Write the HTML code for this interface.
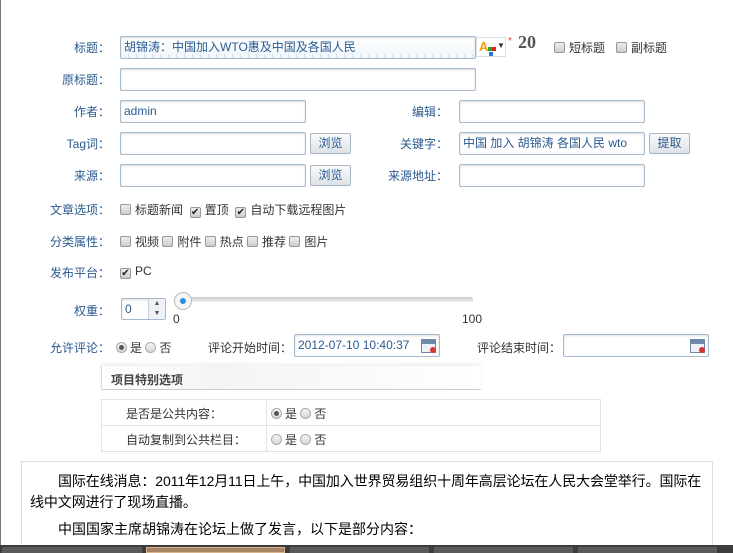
<!DOCTYPE html>
<html><head><meta charset="utf-8"><style>
*{margin:0;padding:0;box-sizing:border-box}
body{width:733px;height:553px;background:#fff;position:relative;overflow:hidden;font:12px "Liberation Sans","Noto Sans CJK SC",sans-serif;color:#333}
.a{position:absolute;white-space:nowrap}
.l{color:#2a5a8f;text-align:right}
.in{position:absolute;border:1px solid #a5b9cf;border-radius:2px;background:#fff;box-shadow:inset 0 1px 2px #ddd;height:23px;padding-left:3px;line-height:21px;color:#2a5a8f}
.btn{position:absolute;border:1px solid #a9b6c4;border-radius:2px;background:linear-gradient(#fafafa,#dde2e8);height:21px;width:41px;text-align:center;line-height:19px;color:#2a5a8f}
.cb{display:inline-block;width:11px;height:11px;border:1px solid #999;border-radius:2px;background:linear-gradient(#eee,#ccc);vertical-align:-1px;margin-right:4px;font-size:10px;line-height:9px;text-align:center;color:#222}
.rd{display:inline-block;width:11px;height:11px;border:1px solid #aaa;border-radius:50%;background:linear-gradient(#f6f6f6,#d6d6d6);vertical-align:-1px;margin-right:3px;position:relative}
.rd.on:after{content:"";position:absolute;left:2px;top:2px;width:5px;height:5px;border-radius:50%;background:#555}
.cal{position:absolute;right:3px;top:4px;width:15px;height:14px;border:1px solid #6d88a8;background:linear-gradient(#6d88a8 0 4px,#eef2f7 4px)}
.cal:after{content:"";position:absolute;right:-1px;bottom:-1px;width:6px;height:6px;border-radius:50%;background:#d33}
</style></head><body>
<div class="a" style="left:0;top:0;width:1px;height:545px;background:#777"></div>

<div class="a l" style="left:40px;top:39px;width:70px">标题：</div>
<div class="in" style="left:120px;top:36px;width:356px;background:repeating-linear-gradient(90deg,transparent 0 7px,#d5dde6 7px 8px) bottom/100% 4px no-repeat,linear-gradient(#fff,#f0f6fb);color:#2a5a8f">胡锦涛：中国加入WTO惠及中国及各国人民</div>
<div class="a" style="left:476px;top:37px;width:30px;height:20px;border:1px solid #ddd;background:#fff"><span style="position:absolute;left:2px;top:1px;color:#f39c12;font-weight:bold;font-size:13px">A</span><span style="position:absolute;left:11px;top:9px;width:4px;height:4px;background:#2a2"></span><span style="position:absolute;left:15px;top:9px;width:4px;height:4px;background:#d22"></span><span style="position:absolute;left:12px;top:14px;width:4px;height:4px;background:#27d"></span><span style="position:absolute;left:20px;top:3px;font-size:8px">▼</span></div>
<div class="a" style="left:508px;top:36px;color:#e33;font-size:10px">*</div>
<div class="a" style="left:518px;top:32px;font:bold 18px 'Liberation Serif',serif;color:#555">20</div>
<div class="a" style="left:554px;top:39px"><span class="cb"></span>短标题</div>
<div class="a" style="left:616px;top:39px"><span class="cb"></span>副标题</div>

<div class="a l" style="left:40px;top:71px;width:70px">原标题：</div>
<div class="in" style="left:120px;top:68px;width:356px"></div>

<div class="a l" style="left:40px;top:103px;width:70px">作者：</div>
<div class="in" style="left:120px;top:100px;width:186px">admin</div>
<div class="a l" style="left:360px;top:103px;width:88px">编辑：</div>
<div class="in" style="left:459px;top:100px;width:186px"></div>

<div class="a l" style="left:40px;top:135px;width:70px">Tag词：</div>
<div class="in" style="left:120px;top:132px;width:186px"></div>
<div class="btn" style="left:310px;top:133px">浏览</div>
<div class="a l" style="left:360px;top:135px;width:88px">关键字：</div>
<div class="in" style="left:459px;top:132px;width:186px">中国 加入 胡锦涛 各国人民 wto</div>
<div class="btn" style="left:649px;top:133px">提取</div>

<div class="a l" style="left:40px;top:167px;width:70px">来源：</div>
<div class="in" style="left:120px;top:164px;width:186px"></div>
<div class="btn" style="left:310px;top:165px">浏览</div>
<div class="a l" style="left:360px;top:167px;width:88px">来源地址：</div>
<div class="in" style="left:459px;top:164px;width:186px"></div>

<div class="a l" style="left:40px;top:201px;width:70px">文章选项：</div>
<div class="a" style="left:120px;top:201px"><span class="cb"></span>标题新闻 &nbsp;<span class="cb">✔</span>置顶 &nbsp;<span class="cb">✔</span>自动下载远程图片</div>
<div class="a l" style="left:40px;top:233px;width:70px">分类属性：</div>
<div class="a" style="left:120px;top:233px"><span class="cb"></span>视频 <span class="cb"></span>附件 <span class="cb"></span>热点 <span class="cb"></span>推荐 <span class="cb"></span>图片</div>
<div class="a l" style="left:40px;top:264px;width:70px">发布平台：</div>
<div class="a" style="left:120px;top:264px"><span class="cb">✔</span>PC</div>

<div class="a l" style="left:40px;top:302px;width:70px">权重：</div>
<div class="in" style="left:121px;top:298px;width:45px;height:22px;line-height:20px">0</div>
<div class="a" style="left:148px;top:299px;width:17px;height:20px;border-left:1px solid #ccd;background:#eef1f5;font-size:7px;line-height:10px;text-align:center;color:#555">▲<br>▼</div>
<div class="a" style="left:176px;top:297px;width:297px;height:5px;background:linear-gradient(#ccc,#eee);border-radius:2px"></div>
<div class="a" style="left:174px;top:292px;width:18px;height:18px;border-radius:50%;border:1px solid #bbb;background:#f6f6f6"><span style="position:absolute;left:5px;top:5px;width:6px;height:6px;border-radius:50%;background:#2a8fe0"></span></div>
<div class="a" style="left:173px;top:312px">0</div>
<div class="a" style="left:462px;top:312px">100</div>

<div class="a l" style="left:40px;top:339px;width:70px">允许评论：</div>
<div class="a" style="left:116px;top:339px"><span class="rd on"></span>是 <span class="rd"></span>否</div>
<div class="a" style="left:208px;top:339px">评论开始时间：</div>
<div class="in" style="left:294px;top:334px;width:146px">2012-07-10 10:40:37<span class="cal"></span></div>
<div class="a" style="left:477px;top:339px">评论结束时间：</div>
<div class="in" style="left:563px;top:334px;width:146px"><span class="cal"></span></div>

<div class="a" style="left:101px;top:366px;width:380px;height:24px;background:linear-gradient(90deg,#fff,#f4f4f4 30%,#fff);border-left:1px solid #ddd;border-bottom:1px solid #ccc;box-shadow:0 -2px 4px #eee"></div>
<div class="a" style="left:111px;top:371px;font-weight:bold;color:#444">项目特别选项</div>
<div class="a" style="left:101px;top:399px;width:500px;height:53px;border:1px solid #e2e2e2"></div>
<div class="a" style="left:101px;top:425px;width:500px;height:1px;background:#e2e2e2"></div>
<div class="a" style="left:266px;top:399px;width:1px;height:53px;background:#e2e2e2"></div>
<div class="a" style="left:126px;top:405px">是否是公共内容：</div>
<div class="a" style="left:126px;top:431px">自动复制到公共栏目：</div>
<div class="a" style="left:271px;top:405px"><span class="rd on"></span>是 <span class="rd"></span>否</div>
<div class="a" style="left:271px;top:431px"><span class="rd"></span>是 <span class="rd"></span>否</div>

<div class="a" style="left:21px;top:461px;width:692px;height:90px;border:1px solid #ddd"></div>
<div class="a" style="left:30px;top:471px;width:680px;white-space:normal;font-size:14px;color:#000;line-height:21px;text-indent:28px;letter-spacing:-0.1px">国际在线消息：2011年12月11日上午，中国加入世界贸易组织十周年高层论坛在人民大会堂举行。国际在线中文网进行了现场直播。</div>
<div class="a" style="left:58px;top:519px;font-size:14px;color:#000">中国国家主席胡锦涛在论坛上做了发言，以下是部分内容：</div>

<div class="a" style="left:0;top:545px;width:733px;height:8px;background:#3c3c3c"></div>
<div class="a" style="left:2px;top:547px;width:140px;height:6px;background:#5a5a5a"></div>
<div class="a" style="left:146px;top:547px;width:139px;height:6px;background:#a58563;border:1px solid #d9b38a"></div>
<div class="a" style="left:290px;top:547px;width:139px;height:6px;background:#5a5a5a"></div>
<div class="a" style="left:434px;top:547px;width:139px;height:6px;background:#5a5a5a"></div>
<div class="a" style="left:578px;top:547px;width:139px;height:6px;background:#5a5a5a"></div>
</body></html>
